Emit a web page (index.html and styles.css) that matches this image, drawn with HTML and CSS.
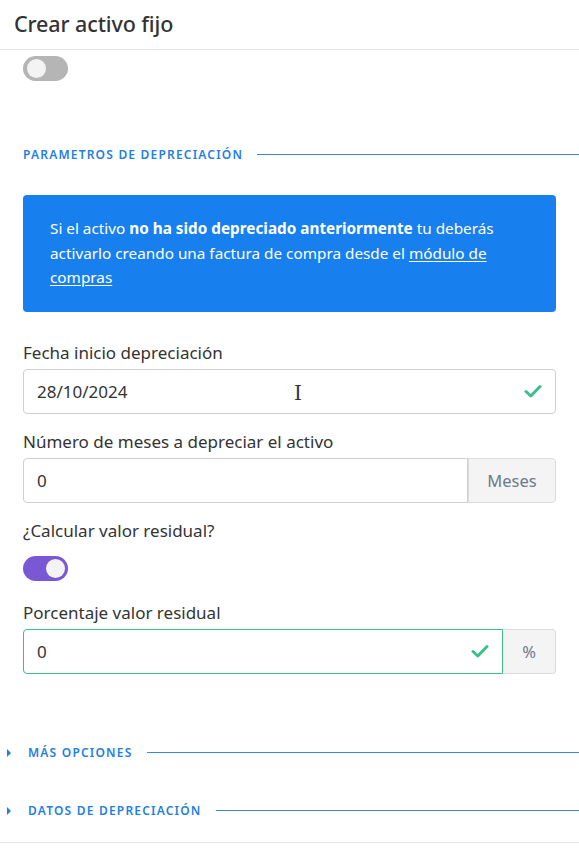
FILE: index.html
```html
<!DOCTYPE html>
<html lang="es">
<head>
    <meta charset="UTF-8">
    <meta name="viewport" content="width=device-width, initial-scale=1.0">
    <title>Crear activo fijo</title>
    <link rel="stylesheet" href="styles.css">
</head>
<body>
    <div class="cabecera">
        <h1 class="titulo">Crear activo fijo</h1>
    </div>
    <div class="contenido">
        <div class="interruptor"><span class="bolita"></span></div>

        <div class="seccion seccion-parametros">
            <span class="seccion-texto">PARAMETROS DE DEPRECIACIÓN</span>
            <span class="seccion-linea"></span>
        </div>

        <div class="alerta">
            Si el activo <strong>no ha sido depreciado anteriormente</strong> tu deberás
            activarlo creando una factura de compra desde el <a href="#">módulo de compras</a>
        </div>

        <label class="etiqueta">Fecha inicio depreciación</label>
        <div class="campo">
            <span class="valor">28/10/2024</span>
            <span class="cursor">I</span>
            <svg class="check" width="18" height="14" viewBox="0 0 18 14">
                <path d="M2 7.5 L6.8 12 L16 2.5" fill="none" stroke="#3cbf8b" stroke-width="3" stroke-linecap="round" stroke-linejoin="round"/>
            </svg>
        </div>

        <label class="etiqueta">Número de meses a depreciar el activo</label>
        <div class="grupo">
            <div class="campo campo-grupo"><span class="valor">0</span></div>
            <div class="sufijo sufijo-meses">Meses</div>
        </div>

        <label class="etiqueta">¿Calcular valor residual?</label>
        <div class="interruptor activo"><span class="bolita"></span></div>

        <label class="etiqueta etiqueta-tras-interruptor">Porcentaje valor residual</label>
        <div class="grupo">
            <div class="campo campo-grupo valido">
                <span class="valor">0</span>
                <svg class="check" width="18" height="14" viewBox="0 0 18 14">
                    <path d="M2 7.5 L6.8 12 L16 2.5" fill="none" stroke="#3cbf8b" stroke-width="3" stroke-linecap="round" stroke-linejoin="round"/>
                </svg>
            </div>
            <div class="sufijo sufijo-pct">%</div>
        </div>
    </div>

    <div class="plegable plegable-opciones">
        <span class="flecha"></span>
        <span class="seccion-texto">MÁS OPCIONES</span>
        <span class="seccion-linea"></span>
    </div>
    <div class="plegable plegable-datos">
        <span class="flecha"></span>
        <span class="seccion-texto">DATOS DE DEPRECIACIÓN</span>
        <span class="seccion-linea"></span>
    </div>
    <div class="pie"></div>
</body>
</html>
```

FILE: styles.css
```css
/* ---------------- base ---------------- */
body {
    margin: 0;
    background: #fff;
    font-family: "Noto Sans", "Open Sans", sans-serif;
    color: #333;
}

.cabecera {
    height: 50px;
    border-bottom: 1px solid #e4e4e4;
    box-sizing: border-box;
    display: flex;
    align-items: center;
    padding-left: 14px;
}

.titulo {
    margin: 0;
    font-size: 21.5px;
    font-weight: 500;
    color: #333;
    letter-spacing: -0.1px;
    margin-top: -3px;
}

.contenido {
    padding: 0 23px;
}

/* ---------------- interruptor ---------------- */
.interruptor {
    width: 45px;
    height: 25px;
    border-radius: 13px;
    background: #b5b5b5;
    margin-top: 6px;
    position: relative;
}

.interruptor .bolita {
    position: absolute;
    top: 3px;
    left: 4px;
    width: 19px;
    height: 19px;
    border-radius: 50%;
    background: #f3f3f3;
}

.interruptor.activo {
    background: #7957d5;
    margin-top: 13px;
}

.interruptor.activo .bolita {
    left: 23px;
}

/* ---------------- secciones ---------------- */
.seccion,
.plegable {
    display: flex;
    align-items: center;
    height: 16px;
}

.seccion {
    margin-top: 65px;
    margin-right: -23px;
}

.seccion-texto {
    font-size: 12px;
    font-weight: 600;
    letter-spacing: 1.2px;
    color: #1f80e0;
    white-space: nowrap;
}

.seccion-linea {
    flex: 1;
    height: 1px;
    background: #3a8bd6;
    margin-left: 14px;
}

.plegable {
    padding-left: 7px;
}

.plegable-opciones {
    margin-top: 71px;
}

.plegable-datos {
    margin-top: 42px;
}

.flecha {
    width: 0;
    height: 0;
    border-top: 4px solid transparent;
    border-bottom: 4px solid transparent;
    border-left: 4px solid #1f80e0;
    margin-right: 17px;
}

.pie {
    margin-top: 23px;
    border-bottom: 1px solid #e4e4e4;
}

/* ---------------- alerta ---------------- */
.alerta {
    margin-top: 33px;
    background: #187fef;
    border-radius: 4px;
    color: #fff;
    font-size: 15.3px;
    line-height: 24.5px;
    padding: 21px 27px 22px;
}

.alerta strong {
    font-weight: 700;
}

.alerta a {
    color: #fff;
    text-decoration: underline;
    text-underline-offset: 2px;
}

/* ---------------- formulario ---------------- */
.etiqueta {
    display: block;
    font-size: 17px;
    line-height: 24px;
    margin-top: 16px;
    margin-bottom: 4px;
    color: #333;
}

.alerta + .etiqueta {
    margin-top: 29px;
}

.etiqueta-tras-interruptor {
    margin-top: 20px;
}

.campo {
    height: 45px;
    box-sizing: border-box;
    border: 1px solid #cfcfcf;
    border-radius: 4px;
    display: flex;
    align-items: center;
    padding: 0 13px;
    position: relative;
}

.valor {
    font-size: 17px;
    color: #333;
    flex: 1;
}

.cursor {
    position: absolute;
    left: 270px;
    top: 11px;
    font-family: "DejaVu Serif", serif;
    font-size: 20px;
    color: #333;
}

.grupo {
    display: flex;
    height: 45px;
}

.campo-grupo {
    flex: 1;
    border-radius: 4px 0 0 4px;
}

.campo-grupo.valido {
    border-color: #3cbf8b;
}

.sufijo {
    box-sizing: border-box;
    background: #f4f4f4;
    border: 1px solid #dcdcdc;
    border-left: none;
    border-radius: 0 4px 4px 0;
    display: flex;
    align-items: center;
    justify-content: center;
    font-size: 16.5px;
    color: #6c7a8b;
}

.sufijo-meses {
    width: 88px;
    border-left: 1px solid #dcdcdc;
}

.sufijo-pct {
    width: 53px;
}
```
